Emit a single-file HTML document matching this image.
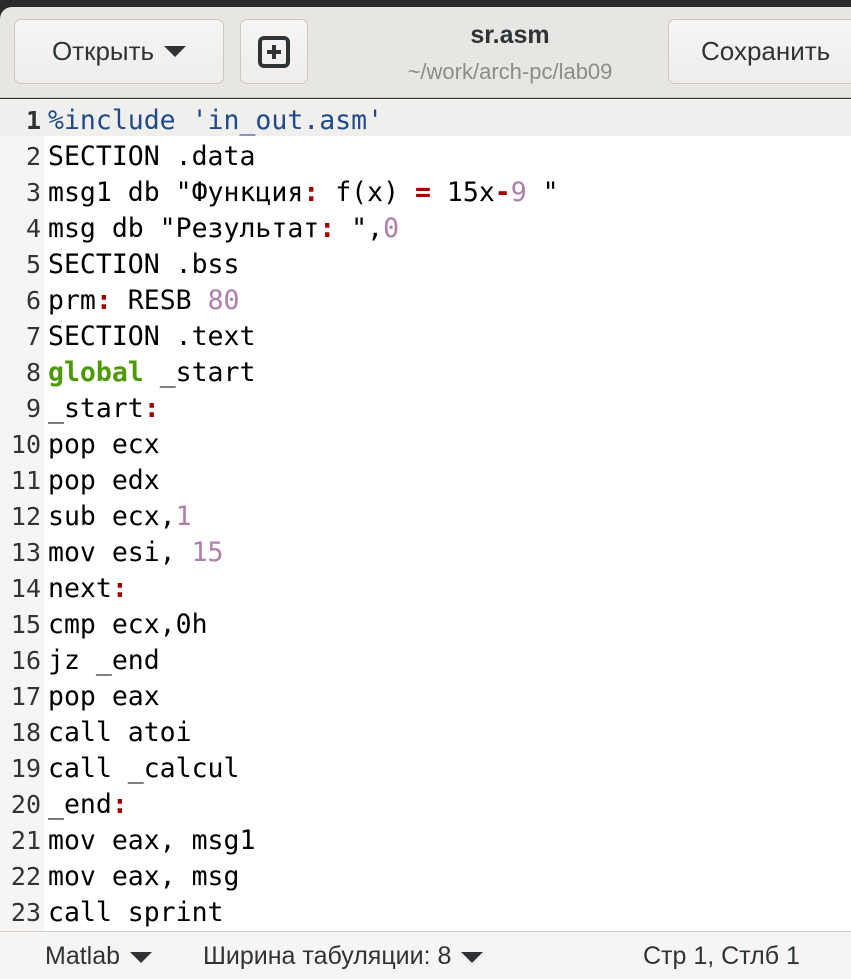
<!DOCTYPE html>
<html><head><meta charset="utf-8"><style>
*{margin:0;padding:0;box-sizing:border-box}
body{width:851px;height:979px;overflow:hidden;background:#2b2b2b;font-family:"Liberation Sans","DejaVu Sans",sans-serif;position:relative}
.hb{position:absolute;left:0;top:7px;width:851px;height:91px;background:#e8e6e3;border-radius:12px 0 0 0;border-bottom:1px solid #d0cdc9}
.btn{position:absolute;top:12px;height:65px;background:linear-gradient(#f6f5f4,#eeedeb);border:1px solid #cdc8c3;border-radius:7px;color:#2e3436;font-size:26px;display:flex;align-items:center;justify-content:center}
.title{position:absolute;left:330px;width:360px;text-align:center;top:14px;font-weight:bold;font-size:25px;color:#2e3436}
.sub{position:absolute;left:330px;width:360px;text-align:center;top:52px;font-size:22px;color:#8a8d89}
.ed{position:absolute;left:0;top:99px;width:851px;height:832px;background:#fff}
.gut{position:absolute;left:0;top:0;width:44px;height:832px;background:#f6f5f4}
.cur{position:absolute;left:0;top:1px;width:851px;height:36px;background:#efefee}
.ln{position:absolute;left:0;width:41px;text-align:right;font-family:"DejaVu Sans Mono","Liberation Mono",monospace;font-size:25px;color:#2e3436;height:36px;line-height:36px;margin-top:3px}
.code{position:absolute;left:48px;font-family:"DejaVu Sans Mono","Liberation Mono",monospace;font-size:26.5px;color:#000;white-space:pre;height:36px;line-height:36px;margin-top:3px}
.k{color:#4e9a06;font-weight:bold}.n{color:#ad7fa8}.p{color:#a40000;font-weight:bold}.i{color:#204a87}
.sb{position:absolute;left:0;top:931px;width:851px;height:48px;background:#f6f5f4;border-top:1px solid #d0cdc9;font-size:25px;color:#2e3436}
.sb span{position:absolute;top:10px}
.tri{display:inline-block;width:0;height:0;border-left:11px solid transparent;border-right:11px solid transparent;border-top:11px solid #2e3436;vertical-align:middle;margin-left:10px}
</style></head><body>
<div class="hb">
<div class="btn" style="left:14px;width:210px">Открыть<span class="tri"></span></div>
<div class="btn" style="left:240px;width:68px"><svg width="34" height="34" viewBox="0 0 34 34"><rect x="3" y="3" width="28" height="28" rx="4" fill="none" stroke="#2e3436" stroke-width="4"/><path d="M17 10v14M10 17h14" stroke="#2e3436" stroke-width="4"/></svg></div>
<div class="title">sr.asm</div>
<div class="sub">~/work/arch-pc/lab09</div>
<div class="btn" style="left:668px;width:200px;justify-content:flex-start;padding-left:32px">Сохранить</div>
</div>
<div class="ed">
<div class="gut"></div>
<div class="cur"></div>
<div class="ln" style="top:1px;font-weight:bold">1</div><div class="code" style="top:1px"><span class="i">%include 'in_out.asm'</span></div>
<div class="ln" style="top:37px">2</div><div class="code" style="top:37px">SECTION .data</div>
<div class="ln" style="top:73px">3</div><div class="code" style="top:73px">msg1 db "Функция<span class="p">:</span> f(x) <span class="p">=</span> 15x<span class="p">-</span><span class="n">9</span> "</div>
<div class="ln" style="top:109px">4</div><div class="code" style="top:109px">msg db "Результат<span class="p">:</span> ",<span class="n">0</span></div>
<div class="ln" style="top:145px">5</div><div class="code" style="top:145px">SECTION .bss</div>
<div class="ln" style="top:181px">6</div><div class="code" style="top:181px">prm<span class="p">:</span> RESB <span class="n">80</span></div>
<div class="ln" style="top:217px">7</div><div class="code" style="top:217px">SECTION .text</div>
<div class="ln" style="top:253px">8</div><div class="code" style="top:253px"><span class="k">global</span> _start</div>
<div class="ln" style="top:289px">9</div><div class="code" style="top:289px">_start<span class="p">:</span></div>
<div class="ln" style="top:325px">10</div><div class="code" style="top:325px">pop ecx</div>
<div class="ln" style="top:361px">11</div><div class="code" style="top:361px">pop edx</div>
<div class="ln" style="top:397px">12</div><div class="code" style="top:397px">sub ecx,<span class="n">1</span></div>
<div class="ln" style="top:433px">13</div><div class="code" style="top:433px">mov esi, <span class="n">15</span></div>
<div class="ln" style="top:469px">14</div><div class="code" style="top:469px">next<span class="p">:</span></div>
<div class="ln" style="top:505px">15</div><div class="code" style="top:505px">cmp ecx,0h</div>
<div class="ln" style="top:541px">16</div><div class="code" style="top:541px">jz _end</div>
<div class="ln" style="top:577px">17</div><div class="code" style="top:577px">pop eax</div>
<div class="ln" style="top:613px">18</div><div class="code" style="top:613px">call atoi</div>
<div class="ln" style="top:649px">19</div><div class="code" style="top:649px">call _calcul</div>
<div class="ln" style="top:685px">20</div><div class="code" style="top:685px">_end<span class="p">:</span></div>
<div class="ln" style="top:721px">21</div><div class="code" style="top:721px">mov eax, msg1</div>
<div class="ln" style="top:757px">22</div><div class="code" style="top:757px">mov eax, msg</div>
<div class="ln" style="top:793px">23</div><div class="code" style="top:793px">call sprint</div>
</div>
<div class="sb">
<span style="left:45px">Matlab<span class="tri"></span></span>
<span style="left:203px">Ширина табуляции: 8<span class="tri"></span></span>
<span style="left:643px">Стр 1, Стлб 1</span>
</div>
</body></html>
